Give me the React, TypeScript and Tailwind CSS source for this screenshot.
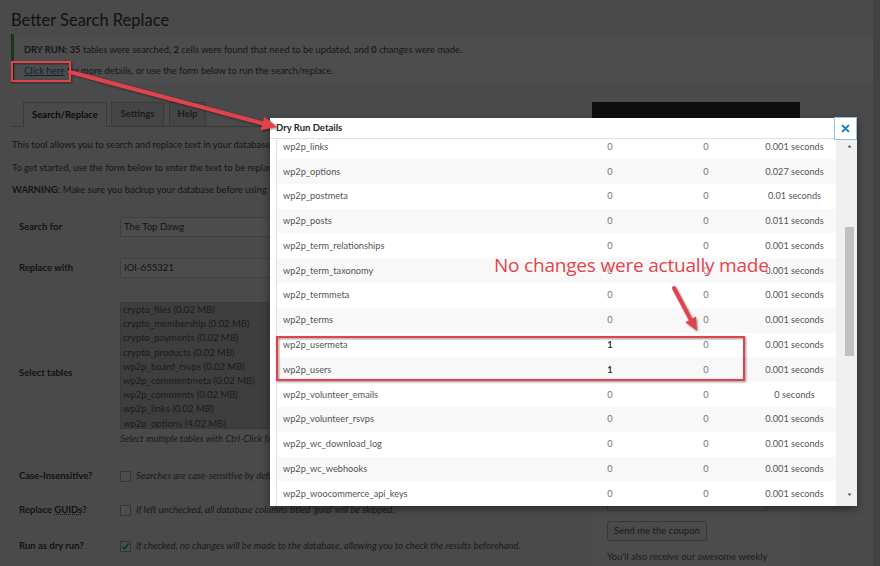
import React from "react";

type Row = [string, string, string, string];

const ROWS: Row[] = [
  ["wp2p_links", "0", "0", "0.001 seconds"],
  ["wp2p_options", "0", "0", "0.027 seconds"],
  ["wp2p_postmeta", "0", "0", "0.01 seconds"],
  ["wp2p_posts", "0", "0", "0.011 seconds"],
  ["wp2p_term_relationships", "0", "0", "0.001 seconds"],
  ["wp2p_term_taxonomy", "0", "0", "0.001 seconds"],
  ["wp2p_termmeta", "0", "0", "0.001 seconds"],
  ["wp2p_terms", "0", "0", "0.001 seconds"],
  ["wp2p_usermeta", "1", "0", "0.001 seconds"],
  ["wp2p_users", "1", "0", "0.001 seconds"],
  ["wp2p_volunteer_emails", "0", "0", "0 seconds"],
  ["wp2p_volunteer_rsvps", "0", "0", "0.001 seconds"],
  ["wp2p_wc_download_log", "0", "0", "0.001 seconds"],
  ["wp2p_wc_webhooks", "0", "0", "0.001 seconds"],
  ["wp2p_woocommerce_api_keys", "0", "0", "0.001 seconds"],
];

const TABLES = [
  "crypto_files (0.02 MB)",
  "crypto_membership (0.02 MB)",
  "crypto_payments (0.02 MB)",
  "crypto_products (0.02 MB)",
  "wp2p_board_rsvps (0.02 MB)",
  "wp2p_commentmeta (0.02 MB)",
  "wp2p_comments (0.02 MB)",
  "wp2p_links (0.02 MB)",
  "wp2p_options (4.02 MB)",
  "wp2p_postmeta (1.52 MB)",
];

function Checkbox({ checked }: { checked?: boolean }) {
  return (
    <span className="flex h-[11px] w-[11px] shrink-0 items-center justify-center border border-[#353535] bg-[#4d4d4d]">
      {checked && (
        <svg width="9" height="9" viewBox="0 0 10 10">
          <path d="M1.6 5.2 L4 7.6 L8.6 1.8" fill="none" stroke="#0d2e3e" strokeWidth="1.8" />
        </svg>
      )}
    </span>
  );
}

export default function App() {
  return (
    <div className="relative h-[566px] w-[880px] overflow-hidden bg-[#4a4a4a] font-['Lato',sans-serif] text-[#161616]">
      <div className="flex h-full">
        <div className="flex w-[873px] shrink-0 flex-col pl-[11px]">
          <h1 className="h-[34px] pt-[10px] text-[16.5px] font-normal leading-[20px] text-[#101213]">
            Better Search Replace
          </h1>
          <div className="flex h-[49px] flex-col border-l-[3px] border-[#16391b] bg-[#4d4d4d] pl-[10px] pt-[9px] text-[9.35px] leading-[13px] text-[#171717]">
            <p className="whitespace-nowrap">
              <b>DRY RUN:</b> <b>35</b> tables were searched, <b>2</b> cells were found that need to be updated, and <b>0</b> changes were made.
            </p>
            <p className="mt-[8px] whitespace-nowrap">
              <span className="text-[#0b2430] underline">Click here</span> for more details, or use the form below to run the search/replace.
            </p>
          </div>

          <div className="mt-[19px] flex">
            <div className="w-[581px] shrink-0">
              <div className="flex h-[25px] items-end border-b border-[#3a3a3a] pl-[12px] text-[9.5px] font-bold">
                <div className="-mb-px flex h-[25px] w-[84px] items-center justify-center border border-b-0 border-[#3a3a3a] bg-[#4a4a4a] text-[#0a0a0a]">
                  Search/Replace
                </div>
                <div className="ml-[4px] flex h-[24px] w-[53px] items-center justify-center border border-b-0 border-[#3a3a3a] bg-[#454545] text-[#1c1c1c]">
                  Settings
                </div>
                <div className="ml-[5px] flex h-[24px] w-[37px] items-center justify-center border border-b-0 border-[#3a3a3a] bg-[#454545] text-[#1c1c1c]">
                  Help
                </div>
              </div>

              <div className="text-[9.35px] leading-[13px] text-[#161616]">
                <p className="mt-[10.5px] whitespace-nowrap pl-[1px]">
                  This tool allows you to search and replace text in your database, and supports serialized arrays and objects.
                </p>
                <p className="mt-[10px] whitespace-nowrap pl-[1px]">
                  To get started, use the form below to enter the text to be replaced and select the tables to update.
                </p>
                <p className="mt-[9px] whitespace-nowrap pl-[1px]">
                  <b>WARNING:</b> Make sure you backup your database before using this tool.
                </p>
              </div>

              <div className="mt-[16.5px] flex h-[30px] items-center">
                <div className="w-[109px] shrink-0 pl-[8px] text-[9.5px] font-bold text-[#131313]">Search for</div>
                <div className="flex h-[20px] w-[320px] items-center border border-[#404040] bg-[#4c4c4c] pl-[3px] text-[9.6px] text-[#141414]">
                  The Top Dawg
                </div>
              </div>

              <div className="mt-[11px] flex h-[30px] items-center">
                <div className="w-[109px] shrink-0 pl-[8px] text-[9.5px] font-bold text-[#131313]">Replace with</div>
                <div className="flex h-[20px] w-[320px] items-center border border-[#404040] bg-[#4c4c4c] pl-[3px] text-[9.6px] text-[#141414]">
                  IOI-655321
                </div>
              </div>

              <div className="mt-[19px] flex items-center">
                <div className="w-[109px] shrink-0 pl-[8px] text-[9.5px] font-bold text-[#131313]">Select tables</div>
                <div className="flex flex-col">
                  <div className="h-[127px] w-[320px] overflow-hidden border border-[#393939] bg-[#3e3e3e] pl-[2px] text-[9.5px] leading-[14.2px] text-[#1b1b1b]">
                    {TABLES.map((t) => (
                      <div key={t} className="whitespace-nowrap">
                        {t}
                      </div>
                    ))}
                  </div>
                  <div className="mt-[3px] whitespace-nowrap text-[9.5px] italic leading-[13px] text-[#1a1a1a]">
                    Select multiple tables with Ctrl-Click for Windows or Cmd-Click for Mac.
                  </div>
                </div>
              </div>

              <div className="mt-[19px] flex h-[24px] items-center">
                <div className="w-[109px] shrink-0 pl-[8px] text-[9.5px] font-bold text-[#131313]">Case-Insensitive?</div>
                <Checkbox />
                <span className="ml-[5px] whitespace-nowrap text-[9.5px] italic text-[#1a1a1a]">
                  Searches are case-sensitive by default.
                </span>
              </div>

              <div className="mt-[10px] flex h-[24px] items-center">
                <div className="w-[109px] shrink-0 pl-[8px] text-[9.5px] font-bold text-[#131313]">
                  Replace <span className="underline decoration-dotted">GUIDs</span>?
                </div>
                <Checkbox />
                <span className="ml-[5px] whitespace-nowrap text-[9.5px] italic text-[#1a1a1a]">
                  If left unchecked, all database columns titled 'guid' will be skipped.
                </span>
              </div>

              <div className="mt-[12px] flex h-[24px] items-center">
                <div className="w-[109px] shrink-0 pl-[8px] text-[9.5px] font-bold text-[#131313]">Run as dry run?</div>
                <Checkbox checked />
                <span className="ml-[5px] whitespace-nowrap text-[9.5px] italic text-[#1a1a1a]">
                  If checked, no changes will be made to the database, allowing you to check the results beforehand.
                </span>
              </div>
            </div>

            <aside className="flex h-[464px] w-[208px] shrink-0 flex-col bg-[#4c4c4c]">
              <div className="h-[150px] bg-[#0e0e0f]" />
              <div className="flex flex-col px-[15px] pt-[239px]">
                <div className="flex h-[20px] w-[160px] items-center border border-[#3c3c3c] bg-[#4d4d4d] pl-[3px] text-[9px] text-[#161616]">
                  Kuzcom
                </div>
                <div className="mt-[10px] flex h-[20px] w-[100px] items-center justify-center rounded-[2px] border border-[#393939] bg-[#4a4a4a] text-[9.5px] text-[#1a1a1a]">
                  Send me the coupon
                </div>
                <div className="mt-[9px] whitespace-nowrap text-[9.35px] leading-[13px] text-[#1c1c1c]">
                  You'll also receive our awesome weekly
                </div>
              </div>
            </aside>
          </div>
        </div>
        <div className="flex-1 bg-[#424242]" />
      </div>

      {/* Modal */}
      <div className="absolute left-[270px] top-[118px] z-10 flex h-[388px] w-[587px] flex-col bg-white shadow-[0_3px_8px_rgba(0,0,0,0.45)]">
        <div className="relative flex h-[21px] shrink-0 items-center border-b border-[#e0e0e0] pl-[6px] text-[9.5px] font-bold text-[#23282d]">
          Dry Run Details
          <div className="absolute right-0 top-[-1px] flex h-[23px] w-[23px] items-center justify-center border border-[#8ec4de] bg-white">
            <svg width="9" height="9" viewBox="0 0 10 10">
              <path d="M1.8 1.8 L8.2 8.2 M8.2 1.8 L1.8 8.2" stroke="#1b7fb8" strokeWidth="2.3" strokeLinecap="round" />
            </svg>
          </div>
        </div>
        <div className="flex min-h-0 flex-1">
          <div className="w-[6px] shrink-0 bg-white" />
          <div className="w-[560px] shrink-0 overflow-hidden border-l border-[#e2e2e2]">
            <div className="-mt-[4.8px]">
              {ROWS.map((r, i) => (
                <div
                  key={r[0]}
                  className={
                    "grid h-[24.8px] grid-cols-[289px_88px_104px_73px] items-center text-[9.2px] text-[#555555] " +
                    (i % 2 === 1 ? "bg-[#f8f8f8]" : "bg-white")
                  }
                >
                  <div className="whitespace-nowrap pl-[6px]">{r[0]}</div>
                  <div className={"text-center " + (r[1] === "1" ? "font-bold text-[#333333]" : "text-[#777777]")}>{r[1]}</div>
                  <div className="text-center text-[#777777]">{r[2]}</div>
                  <div className="whitespace-nowrap text-center">{r[3]}</div>
                </div>
              ))}
            </div>
          </div>
          <div className="flex flex-1 flex-col items-end bg-[#f0f0f0] pr-[3px]">
            <svg className="mt-[4px]" width="9" height="6" viewBox="0 0 9 6">
              <path d="M2.5 4.5 L4.5 2 L6.5 4.5 Z" fill="#555555" />
            </svg>
            <div className="mt-[78px] h-[129px] w-[9px] bg-[#c1c1c1]" />
            <svg className="mb-[8px] mt-auto" width="9" height="6" viewBox="0 0 9 6">
              <path d="M2.5 1.5 L4.5 4 L6.5 1.5 Z" fill="#555555" />
            </svg>
          </div>
        </div>
      </div>

      {/* Annotations */}
      <svg
        className="pointer-events-none absolute left-0 top-0 z-20 [filter:drop-shadow(1px_1px_1px_rgba(0,0,0,0.45))]"
        width="880"
        height="566"
        viewBox="0 0 880 566"
      >
        <rect x="12" y="62" width="58" height="19" fill="none" stroke="#e0434b" strokeWidth="2" />
        <line x1="70" y1="72" x2="263" y2="123.5" stroke="#e0434b" strokeWidth="4" strokeLinecap="round" />
        <polygon points="277,127 260.7,130.2 264.3,116.4" fill="#e0434b" />
        <rect x="277" y="337" width="467" height="43" fill="none" stroke="#e0434b" strokeWidth="2" />
        <line x1="674" y1="288" x2="690.6" y2="319.4" stroke="#e0434b" strokeWidth="4" strokeLinecap="round" />
        <polygon points="697,330.7 685.4,322.3 695.8,316.5" fill="#e0434b" />
      </svg>
      <div className="pointer-events-none absolute left-[494px] top-[256px] z-20 whitespace-nowrap font-['Open_Sans',sans-serif] text-[19px] leading-none tracking-[-0.2px] text-[#e0434b] [text-shadow:0_0_2px_#ffffff,0_0_2px_#ffffff]">
        No changes were actually made
      </div>
    </div>
  );
}
